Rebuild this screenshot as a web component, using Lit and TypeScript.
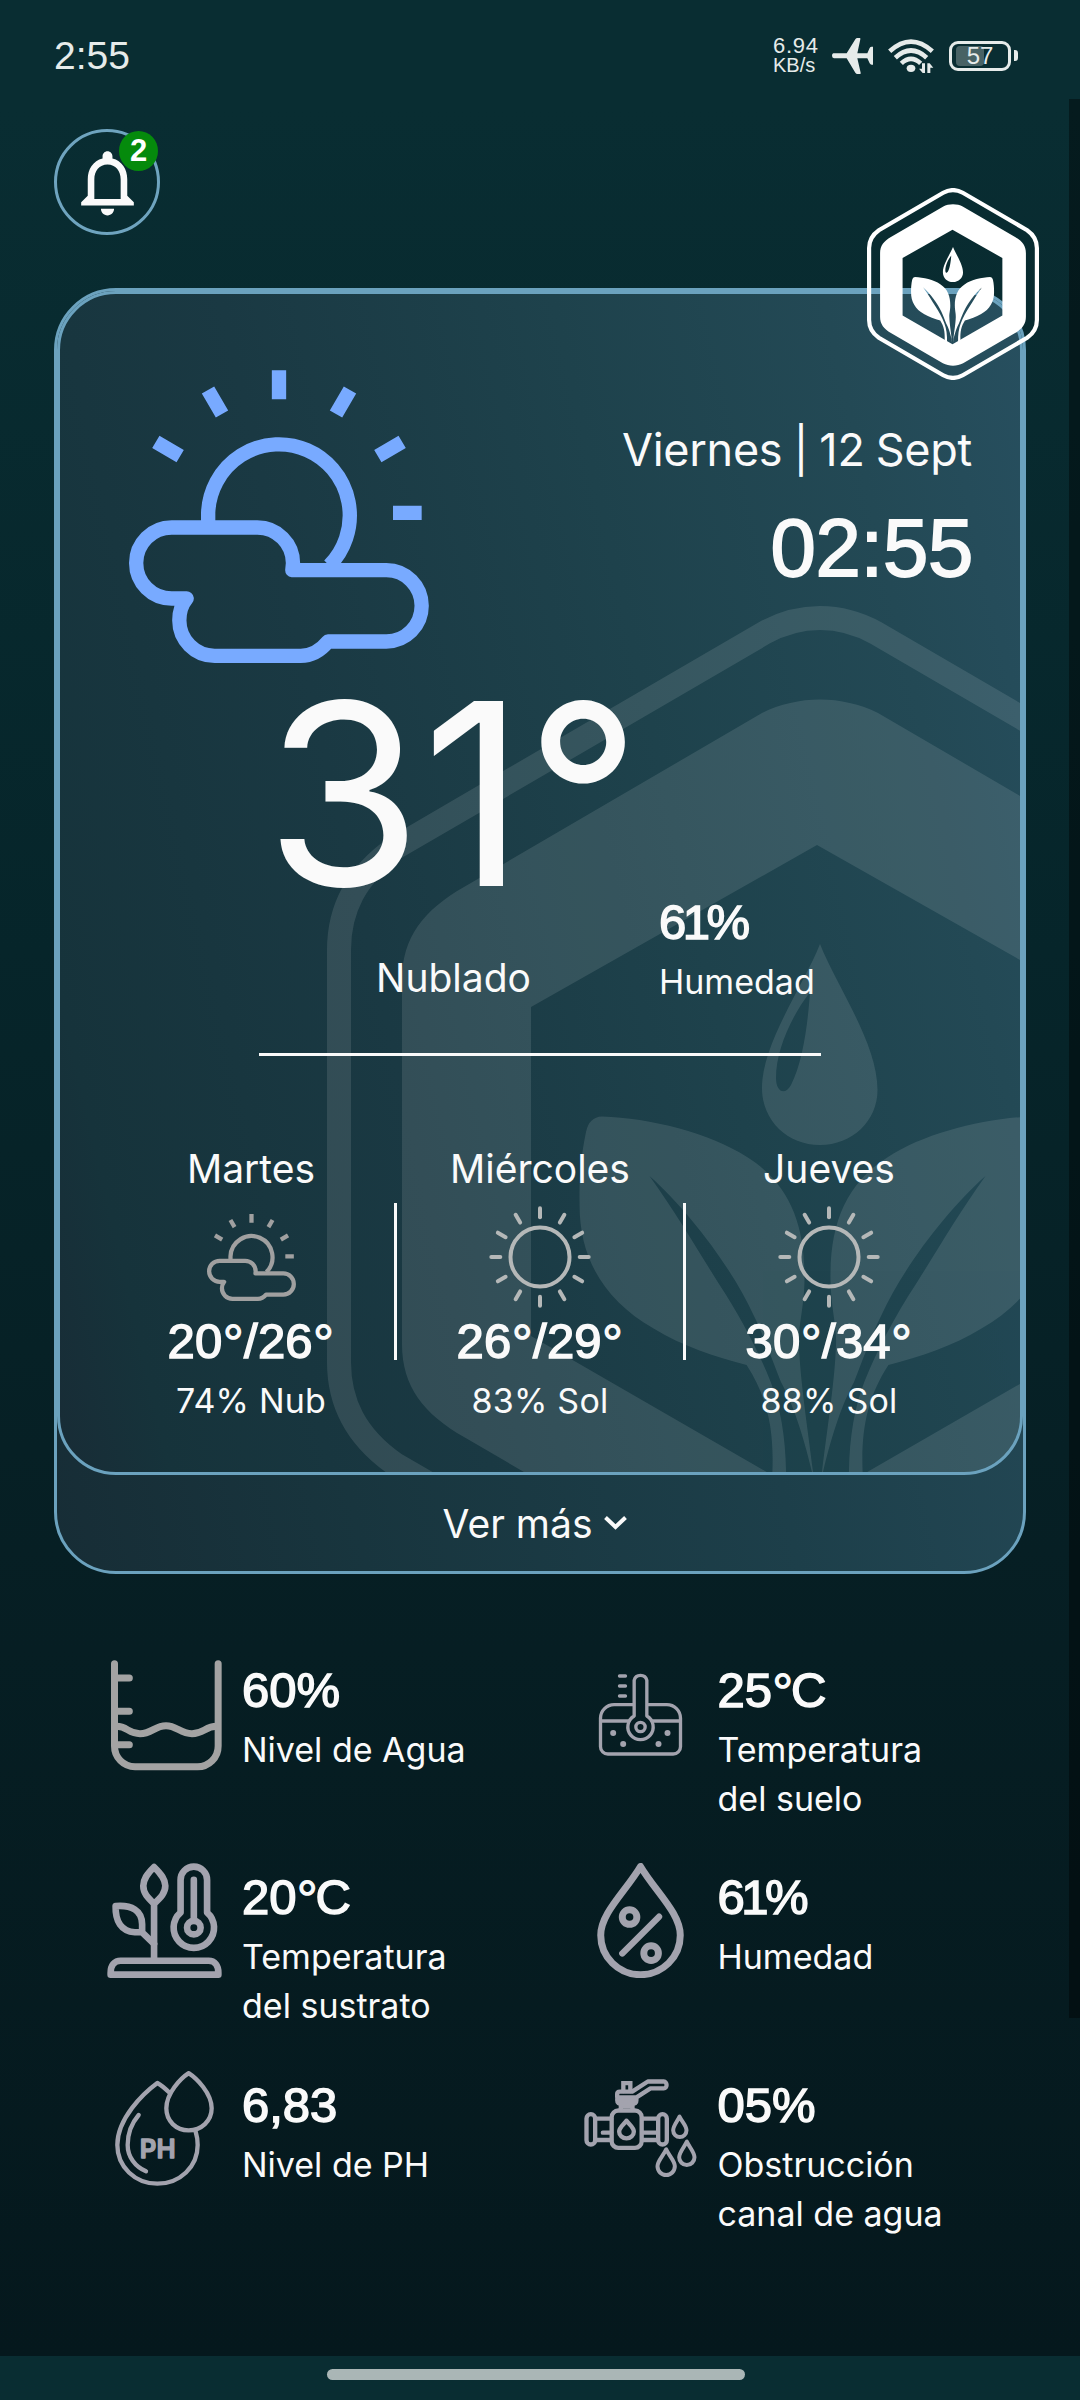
import { LitElement, html, svg, css } from "lit";
import { customElement, property } from "lit/decorators.js";

const LEAF =
  "M586 1132 Q589 1117 602 1116.5 C650 1118 710 1133 747 1157 C790 1184 805 1225 804.5 1279 C804 1310 798 1325 799 1345 C800 1380 808 1430 814 1480 L815 1494 L812 1472 C802 1430 793 1405 781 1382 C773 1362 764 1336 753.5 1315 C733 1270 690 1212 649.5 1176 C676 1213 697 1249 719 1284 C740 1316 758 1350 770.7 1382 C782 1412 787 1445 786 1492 L773 1490 L772.4 1472 C774 1430 768 1398 746.6 1365 C715 1357 682 1346 653.6 1328.6 C604 1300 579 1258 579.6 1203.6 C579 1178 581 1156 586 1132Z";

const logoShapes = svg`
  <path d="M339 950C339 910 355 876 395 848L764 633C800 613 840 613 876 633L1245 848C1285 876 1301 910 1301 950V1362C1301 1402 1285 1436 1245 1464L876 1679C840 1699 800 1699 764 1679L395 1464C355 1436 339 1402 339 1362Z" fill="none" stroke="currentColor" stroke-width="24"/>
  <path fill-rule="evenodd" fill="currentColor" d="M402 980C402 937 424 910 464 887L762 713C798 695 842 695 878 713L1176 887C1216 910 1238 937 1238 980V1344C1238 1387 1216 1414 1176 1437L878 1611C842 1629 798 1629 762 1611L464 1437C424 1414 402 1387 402 1344ZM817 845L531 1007V1336L817 1501L1103 1336V1007Z"/>
  <path fill-rule="evenodd" fill="currentColor" d="M820 944C836 985 877.500 1043 877.500 1090C877.500 1121 852 1145 820 1145C788 1145 762 1121 762 1088C762 1043 804 985 820 944ZM810 992C791 1017 776 1050 776 1078C776 1092 785 1096 791 1085C803 1062 808 1022 810 992Z"/>
  <path d=${LEAF} fill="currentColor"/>
  <path d=${LEAF} fill="currentColor" transform="translate(1635 0) scale(-1 1)"/>`;

const partlyCloudy = html`<svg viewBox="237 270 900 878" fill="none" stroke="currentColor" stroke-width="43" stroke-linejoin="round">
  <path d="M687 270V357M474 329.500L516 401.500M900 329.500L858 401.500M317.500 485L390.500 528M1056.500 485L983.500 528M1029 698H1115"/>
  <path d="M474.500 742V698A212.500 213.500 0 1 1 838 856"/>
  <path d="M365 742H622A107 107 0 0 1 729 849L727 870H1009A106 107 0 0 1 1009 1084H834C812 1111 785 1127 752 1127H494A106 106 0 0 1 388 1020C388 995 395 973 410 955H365A106.500 106.500 0 0 1 365 742Z"/>
</svg>`;

const sun = html`<svg viewBox="-51 -51 102 102" fill="none" stroke="currentColor" stroke-width="4">
  <circle r="29.500"/>
  ${Array.from({ length: 12 }, (_, i) => svg`<path d="M0 -39.700V-48.700" stroke-linecap="round" transform="rotate(${i * 30})"/>`)}
</svg>`;

const icons: Record<string, unknown> = {
  water: html`<svg viewBox="81 78 345 345" fill="none" stroke="#a3a3a3" stroke-width="21" stroke-linecap="round">
    <path d="M103.500 101V348A62 62 0 0 0 165 410.500H352A62 62 0 0 0 414.500 348V101M110 144H148M110 244H148M110 344H148"/>
    <path stroke-linecap="butt" d="M110 289C142 289 145 311 180 311S225 287 258 287S300 311 336 311S375 289 410 289"/>
  </svg>`,
  substrate: html`<svg viewBox="81 699 345 347" fill="none" stroke="#a3a3ae" stroke-width="20" stroke-linejoin="round" stroke-linecap="round">
    <path d="M222 711C200 733 189.500 748 189.500 768C189.500 790 202 803 222 822C242 803 256 790 256 768C256 748 244 733 222 711ZM222 822V990"/>
    <path d="M106 829C154 825 186 842 186 884V908H164C122 905 105 874 106 829ZM186 908L222 943"/>
    <path d="M302 848V750A40 40 0 0 1 382 750V848A61 61 0 1 1 302 848ZM342 750V872"/>
    <circle cx="342" cy="894" r="20.500"/>
    <path d="M91 1036V1030C91 1008 103 994 121 994H387C405 994 416 1008 416 1030V1036Z"/>
  </svg>`,
  soil: html`<svg viewBox="67.500 78 345 345" fill="none" stroke="#a3a3ae" stroke-width="10" stroke-linecap="round">
    <path d="M218 224H161A41 41 0 0 0 120 265V350A22 22 0 0 0 142 372H338A22 22 0 0 0 360 350V265A41 41 0 0 0 319 224H264M122 273H202M278 273H358"/>
    <path d="M221 258V151A19.500 19.500 0 0 1 259 151V258A38 38 0 1 1 221 258Z" stroke-linejoin="round"/>
    <circle cx="240" cy="291" r="14"/>
    <path d="M177 138H195M177 168H195M177 198H195"/>
    <g fill="#a3a3ae" stroke="none"><circle cx="158" cy="309" r="9"/><circle cx="188" cy="342" r="9"/><circle cx="321" cy="309" r="9"/><circle cx="294" cy="342" r="9"/></g>
  </svg>`,
  humidity: html`<svg viewBox="67.500 699 345 347" fill="none" stroke="#a3a3ae" stroke-width="21" stroke-linejoin="round" stroke-linecap="round">
    <path d="M240 709.500C195 785 120 850 120 917A120 119 0 0 0 360 917C360 850 285 785 240 709.500Z"/>
    <circle cx="207" cy="862" r="22"/><circle cx="272" cy="971" r="22"/><path stroke-width="19" d="M185 972L296 861"/>
  </svg>`,
  ph: html`<svg viewBox="81 93 345 345" fill="none" stroke="#a3a3ae" stroke-width="13" stroke-linejoin="round" stroke-linecap="round">
    <path d="M267 157C255 145 243 135 232 129C190 160 112 235 112 315C112 380 165 431 232 431C300 431 353 380 353 315C353 303 351 288 347 275"/>
    <path d="M326 99.500C302 115 259 160 259 205C259 243 288 271 326 271S395 243 395 205C395 160 350 115 326 99.500Z"/>
    <path d="M176 225C150 255 143 285 143 315C143 350 165 380 198 394"/>
    <text class="ph-text" x="179" y="353">PH</text>
  </svg>`,
  valve: html`<svg viewBox="67.500 93 345 345" fill="none" stroke="#a3a3ae" stroke-width="13" stroke-linejoin="round" stroke-linecap="round">
    <rect x="78" y="222.500" width="26" height="91" rx="13"/><rect x="293" y="222.500" width="26" height="91" rx="13"/>
    <path d="M106 236H152M106 300H152M127 278H152M246 236H291M246 278H291M246 300H291"/>
    <rect x="153.500" y="211.500" width="90" height="112" rx="20"/>
    <path d="M198 242C191 253 176 262 176 275A22 20 0 0 0 220 275C220 262 205 253 198 242Z"/>
    <path d="M181 208V197M216 208V197M182 199H215"/>
    <path d="M170 179H228C228 188 222 192 212 192H186C176 192 170 188 170 179Z"/>
    <path d="M170 172V162Q170 155 178 155H215L262 124.500H310A8 10 0 0 1 310 145H270L228 172Z"/>
    <path d="M188.500 153V129.500H209.500V153" stroke-linejoin="miter"/>
    <path stroke-width="12" d="M357 230C350 245 338 257 338 271A20 20 0 0 0 378 271C378 257 364 245 357 230ZM379 305C371 322 356 337 356 352A23 23 0 0 0 402 352C402 337 387 322 379 305ZM317 328C309 347 291 362 291 379A26 26 0 0 0 343 379C343 362 325 347 317 328Z"/>
  </svg>`,
};

// Shared look of the bold figures; the degree sign is a wide ring.
const figureStyles = css`
  .figure { font-family: "Liberation Sans", Arial, sans-serif; font-size: 49px; line-height: 56px; white-space: nowrap; -webkit-text-stroke: 1.5px currentColor; }
  .deg { font-family: Inter, sans-serif; font-weight: 500; font-size: 47px; line-height: 1; -webkit-text-stroke: 0; }
  .tight { letter-spacing: -3.5px; }
`;

const figure = (text: string) =>
  text.split("°").map((part, i) => (i ? html`<span class="deg">°</span>${part}` : part));

const tracking = (text: string) => (text.includes("1") ? "tight" : "");

@customElement("status-bar")
class StatusBar extends LitElement {
  static styles = css`
    :host { display: flex; align-items: center; box-sizing: border-box; height: 99px; padding: 12px 62px 0 54px; color: #e6ebea; font-family: "Liberation Sans", Arial, sans-serif; }
    .clock { font-size: 39px; line-height: 44px; flex: 1; }
    .rate { width: 59px; font-size: 20px; line-height: 18.5px; }
    .rate .value { font-size: 22px; letter-spacing: 0.7px; }
    svg { display: block; }
    .plane { width: 41px; height: 36px; margin-right: 15px; }
    .wifi { width: 46px; height: 34px; margin-right: 15px; }
    .battery { position: relative; display: flex; align-items: center; justify-content: center; box-sizing: border-box; width: 62px; height: 30px; border: 3px solid #e6ebea; border-radius: 9px; font-size: 24px; line-height: 24px; }
    .level { position: absolute; left: 4px; top: 2px; width: 28px; height: 20px; border-radius: 4px; background: #486265; }
    .num { position: relative; }
    .nub { width: 4px; height: 11px; margin: 0 0 0 3px; border-radius: 0 3px 3px 0; background: #e6ebea; }
  `;
  render() {
    return html`
      <div class="clock">2:55</div>
      <div class="rate"><div class="value">6.94</div><div>KB/s</div></div>
      <svg class="plane" viewBox="0 0 123 108" fill="currentColor"><path d="M4 46H44L70 4Q72 0 77 0H83Q86 0 85 4L76 46H106L113 30Q115 26 119 26H123V80H119Q115 80 113 76L106 61H76L86 104Q87 108 84 108H77Q72 108 70 104L44 61H6Q0 60 0 53Q0 47 4 46Z"/></svg>
      <svg class="wifi" viewBox="0 0 138 102" fill="none" stroke="currentColor" stroke-width="14">
        <path d="M5 37Q69 -21 133 37M22 56Q69 13 116 56M40 73Q69 46 98 73"/>
        <ellipse cx="69" cy="88" rx="13" ry="11" fill="currentColor" stroke="none"/>
        <path fill="currentColor" stroke="none" d="M111 73V102H104L93 89H102V73ZM118 102V73H125L136 86H127V102Z"/>
      </svg>
      <div class="battery"><span class="level"></span><span class="num">57</span></div>
      <div class="nub"></div>
    `;
  }
}

@customElement("forecast-day")
class ForecastDay extends LitElement {
  @property() name = "";
  @property() kind = "sun";
  @property() range = "";
  @property() chance = "";
  static styles = [figureStyles, css`
    :host { flex: 1 1 0; display: flex; flex-direction: column; align-items: center; white-space: nowrap; }
    .name { font-size: 39px; line-height: 48px; }
    .icon { display: flex; align-items: center; justify-content: center; height: 102px; margin: 13px 0 5px; color: #b5b8b8; }
    .icon svg { width: 102px; height: 102px; }
    .cloud { color: #a0a0a0; }
    .cloud svg { width: 89px; height: 87px; }
    .range { height: 56px; letter-spacing: 0.2px; }
    .chance { margin-top: 7px; font-size: 34px; line-height: 49px; letter-spacing: 0.2px; }
  `];
  render() {
    return html`
      <div class="name">${this.name}</div>
      <div class="icon ${this.kind}">${this.kind === "cloud" ? partlyCloudy : sun}</div>
      <div class="figure range">${figure(this.range)}</div>
      <div class="chance">${this.chance}</div>
    `;
  }
}

@customElement("metric-item")
class MetricItem extends LitElement {
  @property() icon = "";
  @property() value = "";
  @property() label = "";
  static styles = [figureStyles, css`
    :host { display: flex; gap: 20px; }
    .icon { width: 115px; height: 115px; flex: none; }
    .icon svg { display: block; width: 100%; height: 100%; }
    .text { padding-top: 6px; }
    .value { height: 56px; }
    .value .deg { letter-spacing: -2.5px; }
    .label { margin-top: 7px; font-size: 34px; line-height: 49.3px; white-space: pre-line; }
    .ph-text { font: 600 77px Inter, sans-serif; letter-spacing: 1px; fill: #a3a3ae; stroke: #a3a3ae; stroke-width: 4; }
  `];
  render() {
    return html`
      <div class="icon">${icons[this.icon]}</div>
      <div class="text"><div class="figure value ${tracking(this.value)}">${figure(this.value)}</div><div class="label">${this.label}</div></div>
    `;
  }
}

const METRICS = [
  { icon: "water", value: "60%", label: "Nivel de Agua" },
  { icon: "soil", value: "25°C", label: "Temperatura\ndel suelo" },
  { icon: "substrate", value: "20°C", label: "Temperatura\ndel sustrato" },
  { icon: "humidity", value: "61%", label: "Humedad" },
  { icon: "ph", value: "6,83", label: "Nivel de PH" },
  { icon: "valve", value: "05%", label: "Obstrucción\ncanal de agua" },
];

@customElement("app-root")
class AppRoot extends LitElement {
  static styles = [figureStyles, css`
    :host { position: relative; display: flex; flex-direction: column; width: 1080px; height: 2400px; overflow: hidden; color: #fafafa; font-family: Inter, "Noto Sans", sans-serif; background: linear-gradient(180deg, #092d32 0, #092d32 110px, #06252a 950px, #061e23 1650px, #05181d 2356px); }
    svg { display: block; }
    .scrim { position: absolute; right: 0; top: 99px; width: 11px; height: 1919px; background: rgba(0, 0, 0, 0.4); }
    .header { height: 189px; box-sizing: border-box; padding: 30px 0 0 54px; }
    .bell { position: relative; display: flex; align-items: center; justify-content: center; box-sizing: border-box; width: 106px; height: 106px; border: 3px solid #6fa4bf; border-radius: 50%; }
    .bell svg { width: 79px; height: 79px; }
    .badge { position: absolute; left: 62px; top: -1px; width: 39px; height: 40px; border-radius: 50%; background: #058a0c; color: #fff; font: 700 31px/40px "Liberation Sans", Arial, sans-serif; text-align: center; }
    .card { position: relative; box-sizing: border-box; flex: none; height: 1286px; margin: 0 54px; border: 3px solid #6ba2be; border-radius: 62px; background: linear-gradient(78deg, #172d36, #18353e 25%, #1d3f4a 60%, #254a58 92%); }
    .inner { position: relative; display: flex; flex-direction: column; box-sizing: border-box; height: 1184px; padding: 76px 48px 0; border: 3px solid #6ba2be; border-radius: 59px; overflow: hidden; background: linear-gradient(77deg, #182c36 0%, #16333b 9%, #1a3943 35%, #1e424c 62%, #234955 84%, #274f5f 100%); }
    .watermark { position: absolute; left: 267px; top: 312px; width: 986px; height: 1100px; color: #fff; opacity: 0.105; }
    .logo { position: absolute; right: -16px; top: -103px; width: 172px; height: 192px; color: #fff; }
    .hero { position: relative; display: flex; justify-content: space-between; height: 293px; padding-left: 21px; }
    .hero svg { width: 300px; height: 293px; color: #78aaff; }
    .when { text-align: right; padding-top: 53px; white-space: nowrap; }
    .date { font-size: 45px; line-height: 54px; letter-spacing: -0.28px; word-spacing: -1.2px; }
    .time { margin: 22px -1px 0 0; font-family: "Liberation Sans", Arial, sans-serif; font-size: 81.5px; line-height: 98px; letter-spacing: -0.3px; -webkit-text-stroke: 1.8px currentColor; }
    .temp { position: relative; margin: 31px 0 0 157px; font-size: 254px; line-height: 200px; height: 200px; white-space: nowrap; }
    .now { position: relative; display: flex; height: 112px; padding-left: 268px; }
    .sky { width: 283px; padding-top: 60px; font-size: 39px; line-height: 48px; }
    .hum { height: 56px; }
    .hum-label { margin-top: 7px; font-size: 34px; line-height: 49px; }
    .rule { position: relative; width: 562px; height: 3px; margin: 47px auto 0; background: #fafafa; }
    .days { position: relative; display: flex; margin-top: 89px; }
    .sep { width: 3px; height: 157px; margin-top: 58px; background: #fafafa; }
    .more { display: flex; align-items: center; justify-content: center; height: 98px; padding-right: 10px; gap: 12px; font-size: 39px; line-height: 48px; }
    .more svg { width: 23px; height: 14px; margin-top: -3px; }
    .metrics { display: grid; grid-template-columns: 475.500px 1fr; grid-template-rows: 207px 208px 208px; margin: 82px 0 0 107px; }
    .nav { display: flex; justify-content: center; margin-top: auto; height: 44px; background: #092d32; }
    .pill { width: 418px; height: 11px; margin: 13px 8px 0 0; border-radius: 6px; background: #aab6b6; }
  `];
  render() {
    return html`
      <status-bar></status-bar>
      <div class="header">
        <div class="bell">
          <svg viewBox="0 0 24 24" fill="currentColor"><path d="M12 22c1.100 0 2-.900 2-2h-4c0 1.100.900 2 2 2zm6-6v-5c0-3.070-1.630-5.640-4.500-6.320V4c0-.830-.670-1.500-1.500-1.500s-1.500.670-1.500 1.500v.680C7.640 5.360 6 7.920 6 11v5l-2 2v1h16v-1l-2-2zm-2 1H8v-6c0-2.480 1.510-4.500 4-4.500s4 2.020 4 4.500v6z"/></svg>
          <span class="badge">2</span>
        </div>
      </div>
      <section class="card">
        <div class="inner">
          <svg class="watermark" viewBox="327 606 986 1100">${logoShapes}</svg>
          <div class="hero">
            ${partlyCloudy}
            <div class="when"><div class="date">Viernes | 12 Sept</div><div class="time">02:55</div></div>
          </div>
          <div class="temp">31°</div>
          <div class="now">
            <div class="sky">Nublado</div>
            <div><div class="figure tight hum">61%</div><div class="hum-label">Humedad</div></div>
          </div>
          <div class="rule"></div>
          <div class="days">
            <forecast-day name="Martes" kind="cloud" range="20°/26°" chance="74% Nub"></forecast-day>
            <div class="sep"></div>
            <forecast-day name="Miércoles" range="26°/29°" chance="83% Sol"></forecast-day>
            <div class="sep"></div>
            <forecast-day name="Jueves" range="30°/34°" chance="88% Sol"></forecast-day>
          </div>
        </div>
        <div class="more"><span>Ver más</span><svg viewBox="0 0 23 14" fill="none" stroke="currentColor" stroke-width="4"><path d="M1.500 1.500L11.500 11L21.500 1.500"/></svg></div>
        <svg class="logo" viewBox="327 606 986 1100">${logoShapes}</svg>
      </section>
      <section class="metrics">
        ${METRICS.map((m) => html`<metric-item icon=${m.icon} value=${m.value} label=${m.label}></metric-item>`)}
      </section>
      <div class="nav"><div class="pill"></div></div>
      <div class="scrim"></div>
    `;
  }
}
